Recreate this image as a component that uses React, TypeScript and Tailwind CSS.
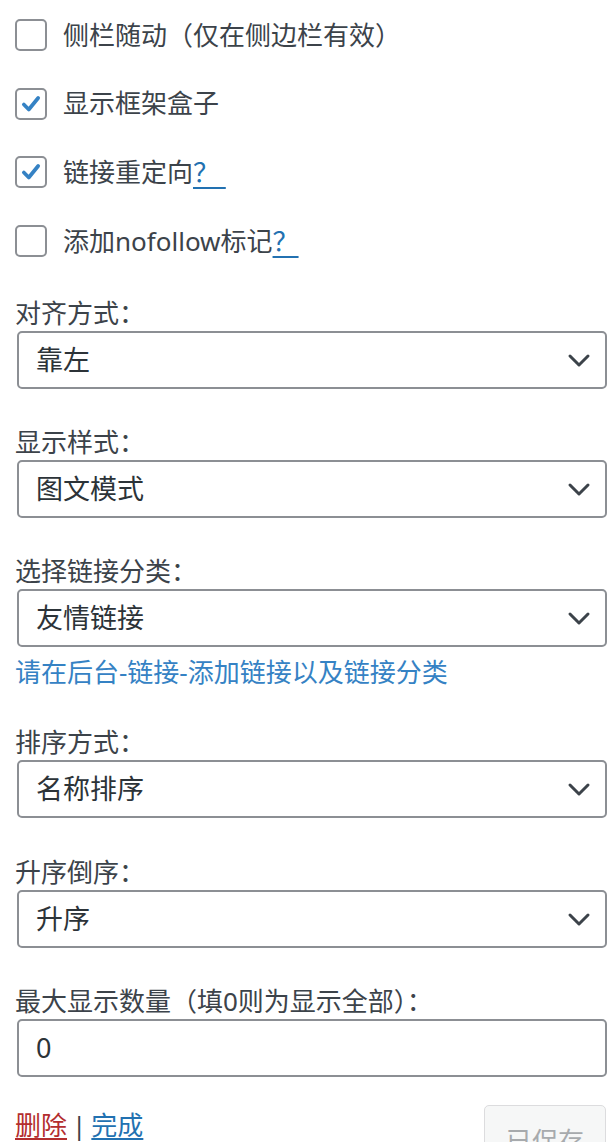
const font = { fontFamily: '"Noto Sans", "Noto Sans CJK SC", sans-serif' };

const Checkbox = ({ checked }: { checked?: boolean }) => (
  <span className="w-[32px] h-[32px] shrink-0 rounded-[5px] border-2 border-[#8c8f94] bg-white flex items-center justify-center">
    {checked && (
      <svg width="22" height="22" viewBox="0 0 20 20">
        <path d="M3.5 10.5 L8 15 L16.5 4.5" fill="none" stroke="#3582c4" strokeWidth="3.4" strokeLinecap="round" strokeLinejoin="round" />
      </svg>
    )}
  </span>
);

const CheckRow = ({ label, checked, help }: { label: string; checked?: boolean; help?: string }) => (
  <label className="h-[68.6px] flex items-center gap-[16px] text-[26px] text-[#3c434a]">
    <Checkbox checked={checked} />
    <span className="whitespace-pre">
      {label}
      {help && <a className="text-[#2271b1] underline underline-offset-[5px] decoration-[2px]">{help}</a>}
    </span>
  </label>
);

const Chevron = () => (
  <svg width="24" height="24" viewBox="0 0 24 24">
    <path d="M3 8 L12 17 L21 8" fill="none" stroke="#3c434a" strokeWidth="3" strokeLinecap="round" strokeLinejoin="round" />
  </svg>
);

const Field = ({ label, value, select = true, top }: { label: string; value: string; select?: boolean; top: string }) => (
  <div className={top}>
    <p className="h-[36px] leading-[36px] text-[26px] text-[#3c434a]">{label}</p>
    <div className="ml-[2px] h-[58px] rounded-[5px] border-2 border-[#8c8f94] bg-white flex items-center justify-between pl-[17px] pr-[14px] text-[27px] text-[#2c3338]">
      <span>{value}</span>
      {select && <Chevron />}
    </div>
  </div>
);

export default function App() {
  return (
    <div className="h-[1142px] overflow-hidden bg-white" style={font}>
      <div className="pl-[15px] pr-[7px] pt-[1px]">
        <CheckRow label="侧栏随动（仅在侧边栏有效）" />
        <CheckRow label="显示框架盒子" checked />
        <CheckRow label="链接重定向" checked help={"？\u00a0"} />
        <CheckRow label="添加nofollow标记" help={"？"} />

        <Field label="对齐方式：" value="靠左" top="mt-[20px]" />
        <Field label="显示样式：" value="图文模式" top="mt-[35px]" />
        <Field label="选择链接分类：" value="友情链接" top="mt-[35px]" />
        <p className="mt-[5px] h-[40px] leading-[40px] text-[26px] text-[#3582c4]">请在后台-链接-添加链接以及链接分类</p>
        <Field label="排序方式：" value="名称排序" top="mt-[32px]" />
        <Field label="升序倒序：" value="升序" top="mt-[36px]" />
        <Field label="最大显示数量（填0则为显示全部）：" value="0" select={false} top="mt-[35px]" />

        <div className="mt-[28px] flex items-start justify-between">
          <p className="text-[26px] leading-[36px] text-[#3c434a] pt-[2px]">
            <a className="text-[#b32d2e] underline underline-offset-[3px]">删除</a>
            <span className="px-[5px]">|</span>
            <a className="text-[#2271b1] underline underline-offset-[3px]">完成</a>
          </p>
          <button className="mr-[1px] w-[122px] h-[60px] rounded-[5px] border border-[#dcdcde] bg-[#f6f7f7] text-[#a7aaad] text-[26px] pt-[12px]">
            已保存
          </button>
        </div>
      </div>
    </div>
  );
}
